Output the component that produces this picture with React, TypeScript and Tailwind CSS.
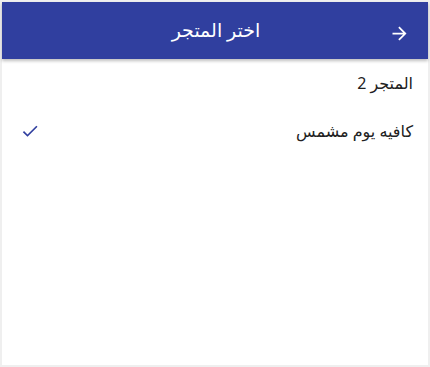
export default function App() {
  const stores = [
    { name: "المتجر 2", selected: false },
    { name: "كافيه يوم مشمس", selected: true },
  ];

  return (
    <div className="h-[367px] w-[430px] bg-[#efefef] p-[2px]" style={{ fontFamily: '"Noto Sans", "DejaVu Sans", sans-serif' }}>
      <div dir="rtl" className="flex h-full flex-col bg-white">
        <header className="relative z-10 flex h-[57px] items-center bg-[#303f9f] pl-[20px] pr-[18px] text-white shadow-[0_2px_3px_rgba(0,0,0,0.25)]">
          <svg viewBox="0 0 24 24" className="mt-[6px] h-[21px] w-[21px]" fill="currentColor">
            <path d="M12 4l-1.41 1.41L16.17 11H4v2h12.17l-5.58 5.59L12 20l8-8z" />
          </svg>
          <h1 className="flex-1 pl-[21px] text-center text-[19px] leading-none">اختر المتجر</h1>
        </header>

        <ul className="flex-1">
          {stores.map((store) => (
            <li key={store.name} className="flex h-[48px] items-center justify-between pl-[18px] pr-[15px] text-[16px] text-[#212121]">
              <span>{store.name}</span>
              {store.selected && (
                <svg viewBox="0 0 24 24" className="h-[20px] w-[20px] text-[#303f9f]" fill="currentColor">
                  <path d="M9 16.17L4.83 12l-1.42 1.41L9 19 21 7l-1.41-1.41z" />
                </svg>
              )}
            </li>
          ))}
        </ul>
      </div>
    </div>
  );
}
